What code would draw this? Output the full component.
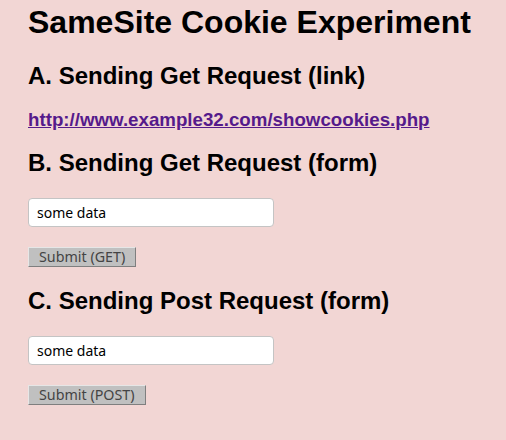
export default function App() {
  const heading = "font-['Liberation_Sans',Arial,sans-serif] font-bold text-[24px] leading-[28px] text-black";
  const input =
    "block w-[246px] h-[29px] rounded-[4px] border border-[#c4c4c4] bg-white px-[8px] font-['Noto_Sans',sans-serif] text-[14px] text-black outline-none";
  const button =
    "block h-[20px] bg-[#c0c0c0] border border-t-[#e6e6e6] border-l-[#e6e6e6] border-b-[#7f7f7f] border-r-[#7f7f7f] px-[10px] font-['Noto_Sans',sans-serif] text-[14.3px] leading-[16px] text-[#444]";

  return (
    <div className="min-h-[440px] w-[506px] bg-[#f2d6d4] px-[28px] pt-[4px]">
      <h1 className="font-['Liberation_Sans',Arial,sans-serif] font-bold text-[32px] leading-[37px] text-black">
        SameSite Cookie Experiment
      </h1>

      <h2 className={`${heading} mt-[21px]`}>A. Sending Get Request (link)</h2>
      <a
        href="#"
        className="mt-[19px] block w-fit font-['Liberation_Sans',Arial,sans-serif] font-bold text-[18.72px] leading-[21px] text-[#551a8b] underline"
      >
        http://www.example32.com/showcookies.php
      </a>

      <h2 className={`${heading} mt-[19px]`}>B. Sending Get Request (form)</h2>
      <form className="mt-[21px]">
        <input className={input} defaultValue="some data" />
        <button type="button" className={`${button} mt-[20px]`}>
          Submit (GET)
        </button>
      </form>

      <h2 className={`${heading} mt-[20px]`}>C. Sending Post Request (form)</h2>
      <form className="mt-[21px]">
        <input className={input} defaultValue="some data" />
        <button type="button" className={`${button} mt-[20px]`}>
          Submit (POST)
        </button>
      </form>
    </div>
  );
}
